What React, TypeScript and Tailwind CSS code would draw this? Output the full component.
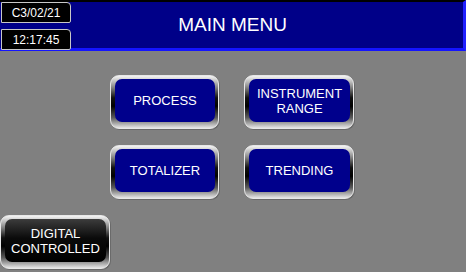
const bezel =
  'rounded-[9px] border border-[#e8e8e8] bg-[linear-gradient(to_bottom,#f4f4f4,#9a9a9a_18%,#101010_42%,#000_58%,#5a5a5a_80%,#e6e6e6)] pl-[4px] pr-[3px] pt-[3px] pb-[6px] shadow-[1px_1px_0_#6a6a6a]'

function MenuButton({ label, dark }: { label: string[]; dark?: boolean }) {
  return (
    <div className={`h-[54px] ${bezel}`}>
      <div
        className={`flex h-full flex-col items-center justify-center rounded-[7px] text-center text-[13px] leading-[15px] text-white ${
          dark
            ? 'bg-[linear-gradient(to_bottom,#3c3c3c,#0a0a0a_45%,#000)]'
            : 'bg-[#00008c]'
        }`}
      >
        {label.map((l) => (
          <span key={l}>{l}</span>
        ))}
      </div>
    </div>
  )
}

function InfoBox({ text }: { text: string }) {
  return (
    <div className="flex h-[21px] w-[70px] items-center justify-center rounded-tr-[4px] rounded-br-[2px] border border-[#c8c8c8] bg-black text-[12px] text-white">
      {text}
    </div>
  )
}

export default function App() {
  return (
    <div className="flex h-[272px] w-[466px] flex-col overflow-hidden bg-[#808080] font-['Liberation_Sans',Arial,sans-serif]">
      {/* Header */}
      <div className="relative flex h-[51px] items-center border-t-2 border-r-[3px] border-b-[3px] border-t-black border-r-[#2020ff] border-b-[#1414ff] bg-[#000088]">
        <div className="absolute left-[1px] top-0 flex flex-col gap-[6px]">
          <InfoBox text="C3/02/21" />
          <InfoBox text="12:17:45" />
        </div>
        <h1 className="w-full pl-[2px] text-center text-[19px] text-white">MAIN MENU</h1>
      </div>

      {/* Menu */}
      <div className="ml-[110px] mt-[24px] grid w-[244px] grid-cols-[109px_110px] gap-x-[25px] gap-y-[16px]">
        <MenuButton label={['PROCESS']} />
        <MenuButton label={['INSTRUMENT', 'RANGE']} />
        <MenuButton label={['TOTALIZER']} />
        <MenuButton label={['TRENDING']} />
      </div>

      <div className="mt-[16px] w-[110px]">
        <MenuButton label={['DIGITAL', 'CONTROLLED']} dark />
      </div>
    </div>
  )
}
